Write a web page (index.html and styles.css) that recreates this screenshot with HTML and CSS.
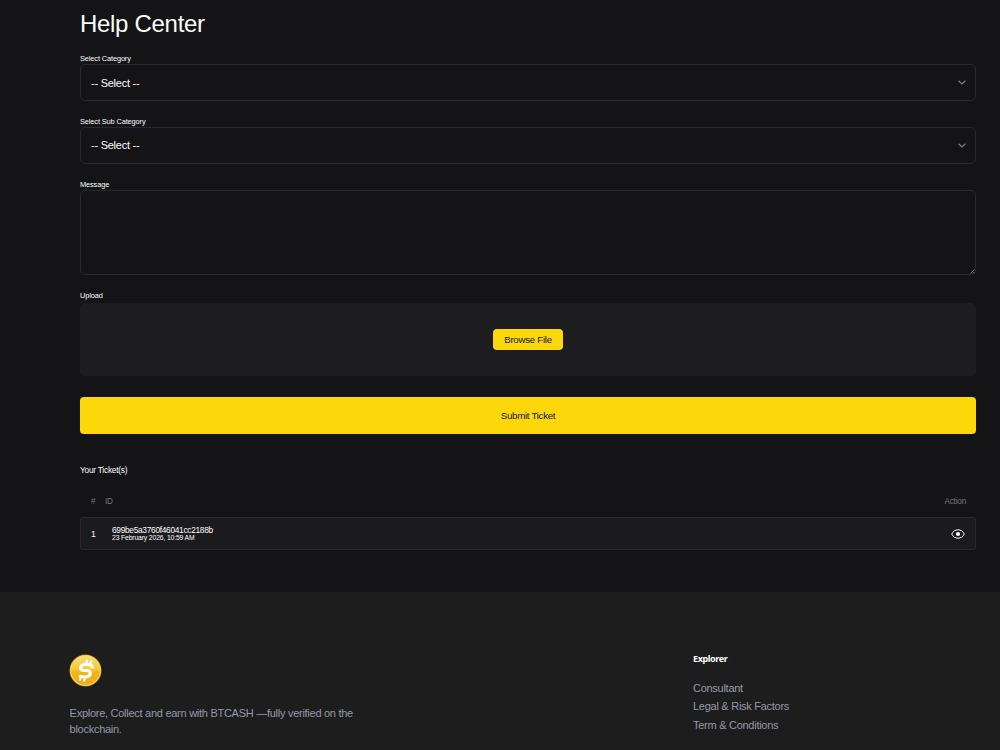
FILE: index.html
```html
<!DOCTYPE html>
<html lang="en">
<head>
  <meta charset="UTF-8" />
  <meta name="viewport" content="width=device-width, initial-scale=1.0" />
  <title>Help Center</title>
  <link rel="stylesheet" href="styles.css">
</head>
<body>
  <main class="help">
    <h1>Help Center</h1>

    <form class="ticket-form">
      <div class="field">
        <label for="category">Select Category</label>
        <div class="select-box">
          <select id="category"><option>-- Select --</option></select>
          <svg class="chevron" viewBox="0 0 8 5"><path d="M.6.7L4 4 7.400.7" /></svg>
        </div>
      </div>
      <div class="field">
        <label for="sub-category">Select Sub Category</label>
        <div class="select-box">
          <select id="sub-category"><option>-- Select --</option></select>
          <svg class="chevron" viewBox="0 0 8 5"><path d="M.6.7L4 4 7.400.7" /></svg>
        </div>
      </div>
      <div class="field field-message">
        <label for="message">Message</label>
        <div class="message-box">
          <textarea id="message"></textarea>
          <svg class="grip" viewBox="0 0 5 5"><path d="M.5 4.500l4-4M3 4.500L4.500 3" /></svg>
        </div>
      </div>
      <div class="field field-upload">
        <label>Upload</label>
        <div class="upload-box">
          <button type="button" class="browse">Browse File</button>
        </div>
      </div>
      <button type="button" class="submit">Submit Ticket</button>
    </form>

    <h2>Your Ticket(s)</h2>
    <div class="ticket-head">
      <span class="col-num">#</span>
      <span class="col-id">ID</span>
      <span>Action</span>
    </div>
    <div class="ticket">
      <span class="ticket-num">1</span>
      <div class="ticket-info">
        <div class="ticket-id">699be5a3760f46041cc2188b</div>
        <div class="ticket-date">23 February 2026, 10:59 AM</div>
      </div>
      <svg class="eye" viewBox="0 0 14 10">
        <path d="M.7 5C2 2.300 4.300.8 7 .8S12 2.300 13.300 5C12 7.700 9.700 9.200 7 9.200S2 7.700.7 5z" />
        <circle cx="7" cy="5" r="2.100" />
      </svg>
    </div>
  </main>

  <footer class="footer">
    <div class="about">
      <svg class="logo" viewBox="0 0 33 33">
        <defs>
          <linearGradient id="coin" x1="0" y1="0" x2="0" y2="1">
            <stop offset="0" stop-color="#f6df73" />
            <stop offset=".45" stop-color="#f3cb3c" />
            <stop offset=".55" stop-color="#eeb51d" />
            <stop offset="1" stop-color="#efad1b" />
          </linearGradient>
        </defs>
        <circle cx="16.500" cy="16.500" r="16" fill="#c98a16" />
        <circle cx="16.500" cy="16.500" r="15" fill="url(#coin)" stroke="#f6dc79" stroke-width="1" />
        <g class="coin-sign">
          <path d="M23 14.500c.8-4-3.500-4.500-7.500-4-4.500.5-5.300 5-1.800 5.800 3 .6 7-.6 7.500 2.300.5 4.300-6 5.500-11 3.300" />
          <path class="thin" d="M18.300 5.500l-1.300 4M22.500 6.500l-1.300 4M12 22.500l-1.300 4.300M16.200 23l-1.200 4.500" />
        </g>
      </svg>
      <p>Explore, Collect and earn with BTCASH —fully verified on the blockchain.</p>
    </div>
    <div class="links">
      <h3>Explorer</h3>
      <a href="#">Consultant</a>
      <a href="#">Legal &amp; Risk Factors</a>
      <a href="#">Term &amp; Conditions</a>
    </div>
  </footer>
</body>
</html>
```
FILE: styles.css
```css
* {
  box-sizing: border-box;
}
body {
  margin: 0;
  height: 750px;
  overflow: hidden;
  background: #141416;
  color: #fcfcfd;
  font-family: "Liberation Sans", Arial, sans-serif;
  font-size: 11px;
  letter-spacing: -.27px;
}
h1, h2, h3, p {
  margin: 0;
  font-weight: 400;
}
.help {
  height: 592px;
  padding: 8px 24px 0 80px;
}
h1 {
  font-size: 24px;
  letter-spacing: -.3px;
  line-height: 31px;
}
.ticket-form {
  display: flex;
  flex-direction: column;
  padding-top: 15px;
}
.field {
  height: 63px;
}
.field:first-child {
  height: 62.6px;
}
label {
  display: block;
  height: 10.4px;
  font-size: 7.4px;
  letter-spacing: -.12px;
  line-height: 10px;
}
.select-box {
  display: flex;
  align-items: center;
  height: 36.6px;
  padding: 0 9px 0 10px;
  border: 1px solid #29292c;
  border-radius: 5px;
}
select {
  flex: 1;
  appearance: none;
  padding: 0;
  border: 0;
  background: none;
  color: #fcfcfd;
  font: inherit;
  letter-spacing: -.25px;
}
.chevron {
  width: 8px;
  height: 5px;
  fill: none;
  stroke: #777e90;
  stroke-width: 1.2;
}
.field-message {
  height: 111.4px;
}
.message-box {
  position: relative;
}
textarea {
  display: block;
  width: 100%;
  height: 85px;
  border: 1px solid #29292c;
  border-radius: 5px;
  background: none;
  color: #fcfcfd;
  font: inherit;
  resize: none;
}
.grip {
  position: absolute;
  right: 1px;
  bottom: 1px;
  width: 5px;
  height: 5px;
  fill: none;
  stroke: #858587;
  stroke-width: .8;
}
.field-upload {
  height: 106px;
}
.field-upload label {
  height: 12px;
}
.upload-box {
  display: flex;
  align-items: center;
  justify-content: center;
  height: 73px;
  border-radius: 5px;
  background: #1d1d1f;
}
button {
  border: 0;
  background: #fcd80a;
  color: #141416;
  font-family: inherit;
  font-size: 9.7px;
  letter-spacing: -.28px;
}
.browse {
  width: 70px;
  height: 21px;
  padding: 0;
  border-radius: 4px;
}
.submit {
  height: 37px;
  border-radius: 4px;
}
h2 {
  margin-top: 30px;
  font-size: 8.3px;
  letter-spacing: -.22px;
  line-height: 12px;
}
.ticket-head {
  display: flex;
  margin-top: 20px;
  padding: 0 10px 0 11px;
  color: #777779;
  font-size: 8.2px;
  letter-spacing: -.2px;
  line-height: 12px;
}
.col-num {
  width: 14px;
}
.col-id {
  flex: 1;
}
.ticket {
  display: flex;
  align-items: center;
  height: 33px;
  margin-top: 9px;
  padding: 1px 10px 0;
  border: 1px solid #29292c;
  border-radius: 3px;
  background: #1b1b1d;
}
.ticket-num {
  width: 21px;
  font-size: 8.8px;
}
.ticket-info {
  flex: 1;
}
.ticket-id {
  font-size: 8.4px;
  letter-spacing: -.32px;
  line-height: 8px;
}
.ticket-date {
  font-size: 6.8px;
  letter-spacing: -.14px;
  line-height: 8px;
}
.eye {
  width: 14px;
  height: 10px;
  fill: none;
  stroke: #fcfcfd;
  stroke-width: 1;
}
.eye circle {
  fill: #fcfcfd;
  stroke: none;
}
.footer {
  display: flex;
  height: 158px;
  padding: 61px 69px 0;
  background: #1d1d1d;
  color: #9698a8;
}
.about {
  width: 624px;
}
.logo {
  display: block;
  width: 33px;
  height: 33px;
  margin-top: .6px;
}
.coin-sign {
  fill: none;
  stroke: #fff;
  stroke-width: 3.2;
}
.thin {
  stroke-width: 2;
}
.about p {
  width: 300px;
  margin: 18.8px 0 0 .6px;
  line-height: 16px;
}
.links {
  display: flex;
  flex-direction: column;
}
h3 {
  margin-bottom: 14px;
  color: #fcfcfd;
  font-family: "Noto Sans", sans-serif;
  font-size: 9px;
  font-weight: 700;
  letter-spacing: -.4px;
  line-height: 12px;
}
.links a {
  color: inherit;
  line-height: 18.3px;
  text-decoration: none;
}
```
